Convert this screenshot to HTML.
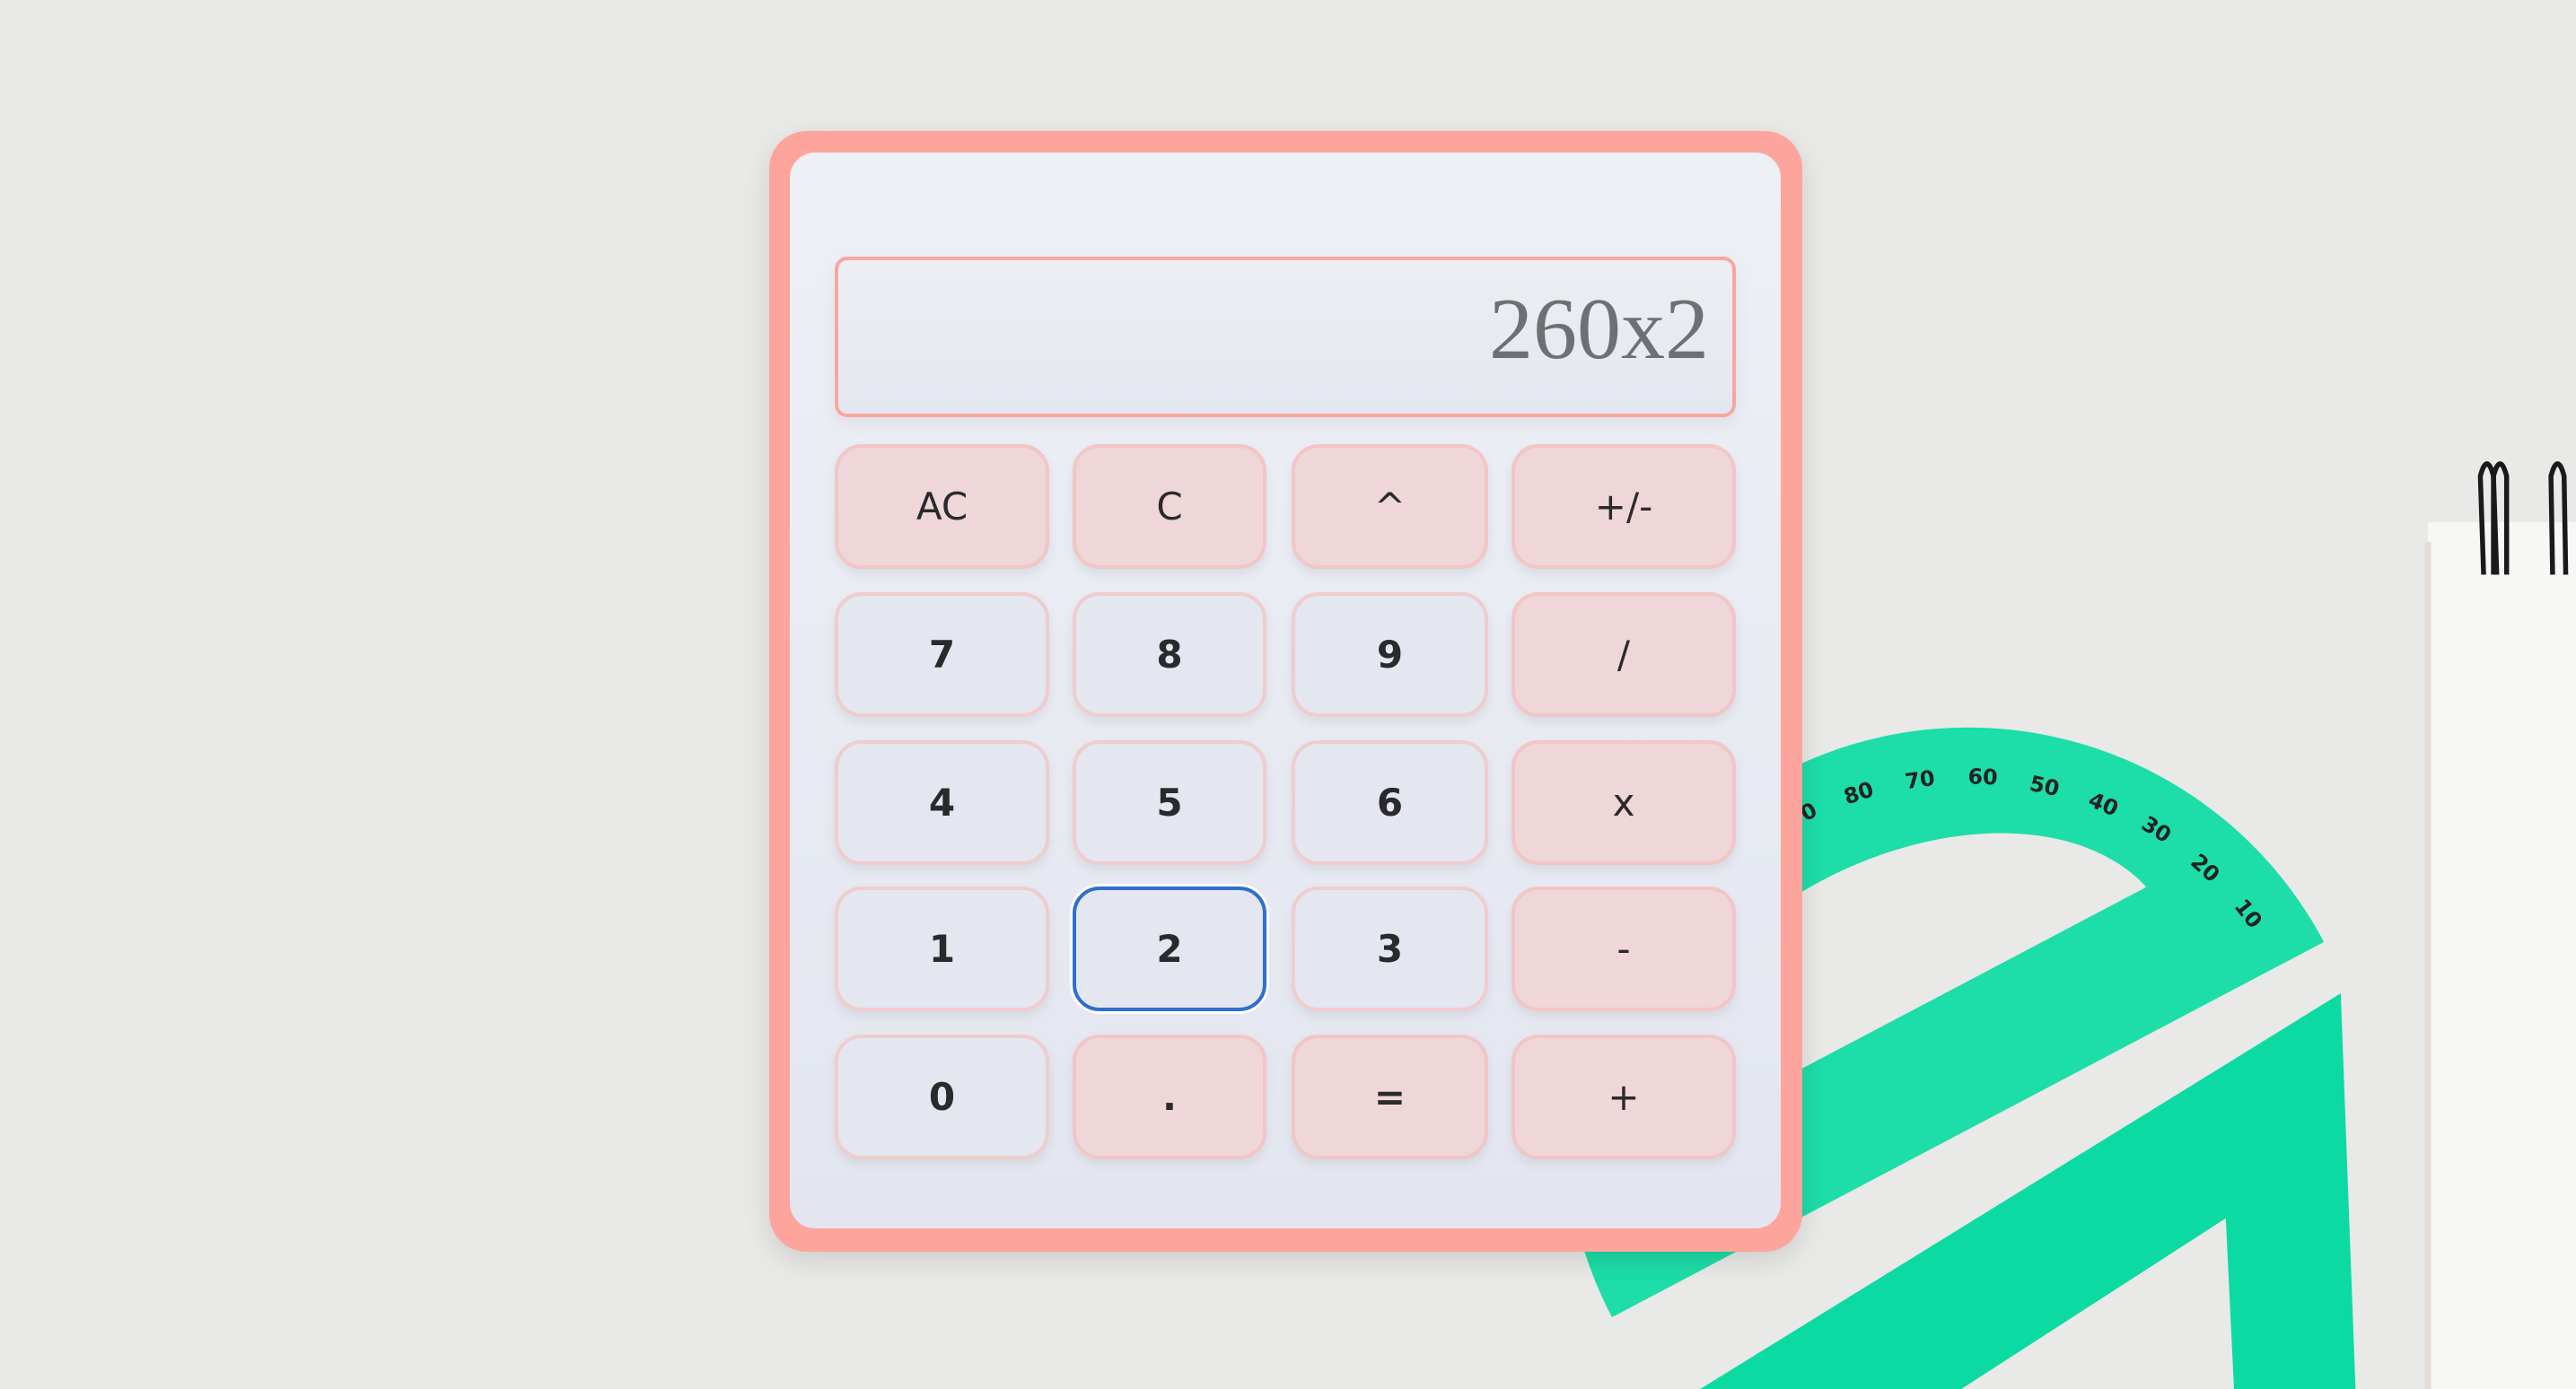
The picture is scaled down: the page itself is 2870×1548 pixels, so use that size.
<!DOCTYPE html>
<html><head><meta charset="utf-8"><style>
html,body{margin:0;padding:0;overflow:hidden;width:2870px;height:1548px;}
body{background:#e9e9e7;position:relative;font-family:"DejaVu Sans","Liberation Sans",sans-serif;}
svg.bg{position:absolute;left:0;top:0;display:block;}
.calc{position:absolute;left:857px;top:146px;width:1151px;height:1249px;background:#fda59c;border-radius:42px;box-shadow:0 10px 30px rgba(0,0,0,.12);}
.inner{position:absolute;left:23px;top:24px;width:1104px;height:1199px;border-radius:28px;background:linear-gradient(#edf0f5,#e3e6ef);overflow:hidden;}
.disp{position:absolute;left:50px;top:116px;width:996px;height:171px;border:4px solid #f9a6a0;border-radius:14px;background:linear-gradient(#eceef3,#e4e7ef);box-shadow:0 8px 20px rgba(0,0,0,.06);}
.disp span{position:absolute;right:26px;top:28px;font-family:"Liberation Serif",serif;font-size:98px;color:#6f7073;line-height:1;}
.b{position:absolute;height:131px;border:4px solid #f0ccce;border-radius:30px;background:#e4e7ef;box-shadow:0 6px 12px rgba(0,0,0,.07);display:flex;align-items:center;justify-content:center;font-size:42px;font-weight:bold;color:#2a2a2c;box-sizing:content-box;}
.o{background:#efd6d8;border-color:#f2c6c6;font-weight:normal;}
.f{border-color:#2f6fcd;box-shadow:0 0 0 3px #fff;}
</style></head><body>
<svg class="bg" width="2870" height="1548" viewBox="0 0 1568 846">
  <rect x="1478" y="318" width="92" height="530" fill="#f7f7f5"/>
  <rect x="1476" y="330" width="4" height="516" fill="#e2ddd6"/>
  <g fill="none" stroke="#1a1a1a" stroke-width="3">
    <path d="M1512 350 L1510 290 Q1514 275 1518 290 L1520 350"/>
    <path d="M1518 350 L1518 290 Q1522 275 1526 290 L1526 350"/>
    <path d="M1554 350 L1553 290 Q1557 275 1561 290 L1562 350"/>
  </g>
  <g transform="translate(1198,688) rotate(-27.8)">
    <path d="M-245 0 A245 245 0 0 1 245 0 Z M-180 -80 A175 115 0 0 1 165 -80 Z" fill="#12dca4" fill-rule="evenodd" opacity="0.95"/>
    <g fill="#222" font-family="DejaVu Sans" font-weight="bold" font-size="13" text-anchor="middle">
      <text x="0" y="-212">90</text>
      <text x="-36" y="-208" transform="rotate(-10 -36 -208)">100</text>
      <text x="36" y="-208" transform="rotate(10 36 -208)">80</text>
      <text x="-72" y="-198" transform="rotate(-20 -72 -198)">110</text>
      <text x="72" y="-198" transform="rotate(20 72 -198)">70</text>
      <text x="-106" y="-182" transform="rotate(-30 -106 -182)">120</text>
      <text x="106" y="-182" transform="rotate(30 106 -182)">60</text>
      <text x="-136" y="-160" transform="rotate(-40 -136 -160)">130</text>
      <text x="136" y="-160" transform="rotate(40 136 -160)">50</text>
      <text x="162" y="-134" transform="rotate(50 162 -134)">40</text>
      <text x="183" y="-106" transform="rotate(60 183 -106)">30</text>
      <text x="198" y="-72" transform="rotate(70 198 -72)">20</text>
      <text x="208" y="-36" transform="rotate(80 208 -36)">10</text>
    </g>
  </g>
  <path d="M1425 605 L1434 846 L1035 846 Z M1355 742 L1360 846 L1194 846 Z" fill="#0bdba2" fill-rule="evenodd"/>
</svg>
<div class="calc"><div class="inner">
  <div class="disp"><span>260x2</span></div>
  <div class="b o" style="left:50px;top:325px;width:231px">AC</div>
  <div class="b o" style="left:315px;top:325px;width:208px">C</div>
  <div class="b o" style="left:559px;top:325px;width:211px">^</div>
  <div class="b o" style="left:804px;top:325px;width:242px">+/-</div>
  <div class="b" style="left:50px;top:490px;width:231px">7</div>
  <div class="b" style="left:315px;top:490px;width:208px">8</div>
  <div class="b" style="left:559px;top:490px;width:211px">9</div>
  <div class="b o" style="left:804px;top:490px;width:242px">/</div>
  <div class="b" style="left:50px;top:655px;width:231px">4</div>
  <div class="b" style="left:315px;top:655px;width:208px">5</div>
  <div class="b" style="left:559px;top:655px;width:211px">6</div>
  <div class="b o" style="left:804px;top:655px;width:242px">x</div>
  <div class="b" style="left:50px;top:818px;width:231px">1</div>
  <div class="b f" style="left:315px;top:818px;width:208px">2</div>
  <div class="b" style="left:559px;top:818px;width:211px">3</div>
  <div class="b o" style="left:804px;top:818px;width:242px">-</div>
  <div class="b" style="left:50px;top:983px;width:231px">0</div>
  <div class="b o" style="left:315px;top:983px;width:208px;font-weight:bold">.</div>
  <div class="b o" style="left:559px;top:983px;width:211px;font-weight:bold">=</div>
  <div class="b o" style="left:804px;top:983px;width:242px">+</div>
</div></div>
</body></html>
